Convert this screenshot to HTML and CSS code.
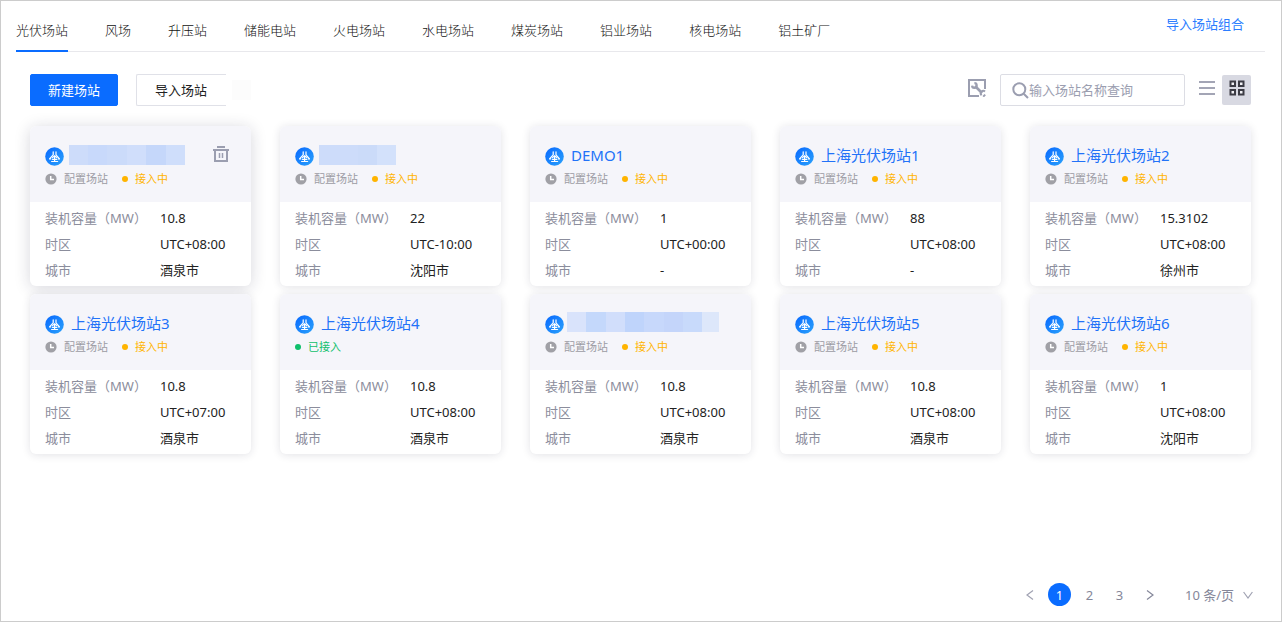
FILE: index.html
```html
<!DOCTYPE html>
<html lang="zh-CN">
<head>
<meta charset="utf-8">
<meta name="viewport" content="width=device-width, initial-scale=1">
<title>光伏场站</title>
<link rel="stylesheet" href="styles.css">
</head>
<body>
<svg class="sprite" aria-hidden="true">
  <defs>
    <linearGradient id="blue" x1="0" y1="0" x2="1" y2="1">
      <stop offset="0" stop-color="#0868ff"/><stop offset="1" stop-color="#2ba2fb"/>
    </linearGradient>
  </defs>
  <symbol id="station" viewBox="0 0 19 19">
    <circle cx="9.500" cy="9.500" r="9.300" fill="url(#blue)"/>
    <g fill="none" stroke="#fff" stroke-width="1.200" stroke-linecap="round">
      <path d="M8.200 4.800v3L4.500 11.800M11 4.800v3l3.500 4M7.400 10.600l2.200-1.800 2.200 1.800M9.600 9v5.200M7.500 12.300h4.200M4.500 11.900h1.300M14.500 11.900h-1.300M6.600 14.500h6"/>
    </g>
  </symbol>
  <symbol id="clock" viewBox="0 0 12 12">
    <circle cx="6" cy="6" r="5.600" fill="#a0a0a6"/>
    <path d="M5.700 3v3.500H9" fill="none" stroke="#fff" stroke-width="1.500"/>
  </symbol>
</svg>
<div class="page">
  <header class="top">
    <nav class="tabs">
      <a class="tab active" href="#">光伏场站</a>
      <a class="tab" href="#">风场</a>
      <a class="tab" href="#">升压站</a>
      <a class="tab" href="#">储能电站</a>
      <a class="tab" href="#">火电场站</a>
      <a class="tab" href="#">水电场站</a>
      <a class="tab" href="#">煤炭场站</a>
      <a class="tab" href="#">铝业场站</a>
      <a class="tab" href="#">核电场站</a>
      <a class="tab" href="#">铝土矿厂</a>
    </nav>
    <a class="import-link" href="#">导入场站组合</a>
  </header>

  <div class="toolbar">
    <button class="btn primary" type="button">新建场站</button>
    <button class="btn open" type="button">导入场站</button>
    <span class="patch"></span>
    <div class="tools">
      <button class="icon-btn config" type="button" aria-label="配置">
        <svg width="18" height="18" viewBox="0 0 18 18" fill="none" stroke="#9b9eb0">
          <path d="M17 10V1H1v16h10" stroke-width="2"/>
          <path d="M7 7l7 7" stroke-width="2.600"/>
          <path d="M6.400 4.200a2.300 2.300 0 1 1-2.300 2.400" stroke-width="2.200"/>
          <path d="M17 12.600a2.200 2.200 0 1 0-3.400 3.600M17.200 15.600l-2 2" stroke-width="2"/>
        </svg>
      </button>
      <label class="search">
        <svg width="17" height="17" viewBox="0 0 17 17" fill="none" stroke="#9b9eb0" stroke-width="2">
          <circle cx="7.300" cy="7.300" r="6"/><path d="M11.700 11.700l4.300 4.300"/>
        </svg>
        <input type="text" placeholder="输入场站名称查询" aria-label="输入场站名称查询">
      </label>
      <button class="icon-btn list" type="button" aria-label="列表">
        <svg width="16" height="16" viewBox="0 0 16 16" stroke="#a3a5b5" stroke-width="2">
          <path d="M0 2h16M0 8h16M0 14h16"/>
        </svg>
      </button>
      <button class="icon-btn grid-view" type="button" aria-label="卡片">
        <svg width="16" height="16" viewBox="0 0 16 16" fill="#f2f2f6" stroke="#3c3c44" stroke-width="2">
          <path d="M1.500 1.500h4.500v4.500H1.500zM10 1.500h4.500v4.500H10zM1.500 10h4.500v4.500H1.500zM10 10h4.500v4.500H10z"/>
        </svg>
      </button>
    </div>
  </div>

  <main class="cards">
    <article class="card raised">
      <div class="head">
        <div class="title"><svg class="logo"><use href="#station"/></svg><span class="mask m1"></span>
          <button class="icon-btn trash" type="button" aria-label="删除">
            <svg width="16" height="16" viewBox="0 0 16 16" fill="none" stroke="#9b9eb0" stroke-width="2">
              <path d="M0 4h16M4 1h8M2 4v11h12V4"/><path d="M6.500 7v5M9.500 7v5" stroke-width="1.500"/>
            </svg>
          </button>
        </div>
        <div class="status"><svg class="clock"><use href="#clock"/></svg><span>配置场站</span><span class="state">接入中</span></div>
      </div>
      <dl><dt>装机容量（MW）</dt><dd>10.8</dd><dt>时区</dt><dd>UTC+08:00</dd><dt>城市</dt><dd>酒泉市</dd></dl>
    </article>
    <article class="card">
      <div class="head">
        <div class="title"><svg class="logo"><use href="#station"/></svg><span class="mask m2"></span></div>
        <div class="status"><svg class="clock"><use href="#clock"/></svg><span>配置场站</span><span class="state">接入中</span></div>
      </div>
      <dl><dt>装机容量（MW）</dt><dd>22</dd><dt>时区</dt><dd>UTC-10:00</dd><dt>城市</dt><dd>沈阳市</dd></dl>
    </article>
    <article class="card">
      <div class="head">
        <div class="title"><svg class="logo"><use href="#station"/></svg><a class="name" href="#">DEMO1</a></div>
        <div class="status"><svg class="clock"><use href="#clock"/></svg><span>配置场站</span><span class="state">接入中</span></div>
      </div>
      <dl><dt>装机容量（MW）</dt><dd>1</dd><dt>时区</dt><dd>UTC+00:00</dd><dt>城市</dt><dd>-</dd></dl>
    </article>
    <article class="card">
      <div class="head">
        <div class="title"><svg class="logo"><use href="#station"/></svg><a class="name" href="#">上海光伏场站1</a></div>
        <div class="status"><svg class="clock"><use href="#clock"/></svg><span>配置场站</span><span class="state">接入中</span></div>
      </div>
      <dl><dt>装机容量（MW）</dt><dd>88</dd><dt>时区</dt><dd>UTC+08:00</dd><dt>城市</dt><dd>-</dd></dl>
    </article>
    <article class="card">
      <div class="head">
        <div class="title"><svg class="logo"><use href="#station"/></svg><a class="name" href="#">上海光伏场站2</a></div>
        <div class="status"><svg class="clock"><use href="#clock"/></svg><span>配置场站</span><span class="state">接入中</span></div>
      </div>
      <dl><dt>装机容量（MW）</dt><dd>15.3102</dd><dt>时区</dt><dd>UTC+08:00</dd><dt>城市</dt><dd>徐州市</dd></dl>
    </article>
    <article class="card">
      <div class="head">
        <div class="title"><svg class="logo"><use href="#station"/></svg><a class="name" href="#">上海光伏场站3</a></div>
        <div class="status"><svg class="clock"><use href="#clock"/></svg><span>配置场站</span><span class="state">接入中</span></div>
      </div>
      <dl><dt>装机容量（MW）</dt><dd>10.8</dd><dt>时区</dt><dd>UTC+07:00</dd><dt>城市</dt><dd>酒泉市</dd></dl>
    </article>
    <article class="card">
      <div class="head">
        <div class="title"><svg class="logo"><use href="#station"/></svg><a class="name" href="#">上海光伏场站4</a></div>
        <div class="status"><span class="state done">已接入</span></div>
      </div>
      <dl><dt>装机容量（MW）</dt><dd>10.8</dd><dt>时区</dt><dd>UTC+08:00</dd><dt>城市</dt><dd>酒泉市</dd></dl>
    </article>
    <article class="card">
      <div class="head">
        <div class="title"><svg class="logo"><use href="#station"/></svg><span class="mask m3"></span></div>
        <div class="status"><svg class="clock"><use href="#clock"/></svg><span>配置场站</span><span class="state">接入中</span></div>
      </div>
      <dl><dt>装机容量（MW）</dt><dd>10.8</dd><dt>时区</dt><dd>UTC+08:00</dd><dt>城市</dt><dd>酒泉市</dd></dl>
    </article>
    <article class="card">
      <div class="head">
        <div class="title"><svg class="logo"><use href="#station"/></svg><a class="name" href="#">上海光伏场站5</a></div>
        <div class="status"><svg class="clock"><use href="#clock"/></svg><span>配置场站</span><span class="state">接入中</span></div>
      </div>
      <dl><dt>装机容量（MW）</dt><dd>10.8</dd><dt>时区</dt><dd>UTC+08:00</dd><dt>城市</dt><dd>酒泉市</dd></dl>
    </article>
    <article class="card">
      <div class="head">
        <div class="title"><svg class="logo"><use href="#station"/></svg><a class="name" href="#">上海光伏场站6</a></div>
        <div class="status"><svg class="clock"><use href="#clock"/></svg><span>配置场站</span><span class="state">接入中</span></div>
      </div>
      <dl><dt>装机容量（MW）</dt><dd>1</dd><dt>时区</dt><dd>UTC+08:00</dd><dt>城市</dt><dd>沈阳市</dd></dl>
    </article>
  </main>

  <footer class="pager">
    <button class="pg" type="button" aria-label="上一页"><svg width="8" height="10" viewBox="0 0 8 10" fill="none" stroke="#a0a2b2" stroke-width="1.200"><path d="M7 .6L1 5l6 4.400"/></svg></button>
    <button class="pg current" type="button">1</button>
    <button class="pg" type="button">2</button>
    <button class="pg" type="button">3</button>
    <button class="pg" type="button" aria-label="下一页"><svg width="8" height="10" viewBox="0 0 8 10" fill="none" stroke="#85879a" stroke-width="1.200"><path d="M1 .6L7 5 1 9.400"/></svg></button>
    <label class="size">
      <select aria-label="每页条数"><option>10 条/页</option><option>20 条/页</option></select>
      <svg width="10" height="8" viewBox="0 0 10 8" fill="none" stroke="#a0a2b2" stroke-width="1.200"><path d="M.6 1L5 7l4.400-6"/></svg>
    </label>
  </footer>
</div>
</body>
</html>
```
FILE: styles.css
```css
* { box-sizing: border-box; }
body {
  margin: 0;
  font: 13px/20px "Noto Sans", "Noto Sans CJK SC", sans-serif;
  color: #2e2f38;
  background: #fff;
}
button, input, select { font: inherit; }
a { text-decoration: none; color: inherit; }
.sprite { position: absolute; width: 0; height: 0; }
.page {
  min-height: 100vh;
  display: flex;
  flex-direction: column;
  border: 1px solid #ccc;
}

.top {
  display: flex;
  justify-content: space-between;
  margin: 0 16px 0 15px;
  border-bottom: 1px solid #e8e8ec;
}
.tabs { display: flex; gap: 37px; }
.tab {
  padding: 19px 0 10px;
  margin-bottom: -1px;
  border-bottom: 2px solid transparent;
  white-space: nowrap;
  font-weight: 300;
  color: #111;
}
.tab.active { border-color: #0a6cff; }
.import-link { padding: 13px 21px 0 0; color: #2b7dff; white-space: nowrap; }

.toolbar {
  display: flex;
  align-items: center;
  padding: 22px 30px 20px 29px;
}
.btn {
  height: 32px;
  padding: 0 17px;
  border: 1px solid #e0e1e8;
  border-radius: 2px;
  background: #fff;
  white-space: nowrap;
  color: #222;
}
.btn.primary { background: #0a6cff; border-color: #0a6cff; color: #fff; }
.btn.open { margin-left: 18px; padding: 0 19px 0 18px; border-right: 0; border-radius: 2px 0 0 2px; }
.patch { width: 19px; height: 20px; margin-left: 6px; background: #fcfcfc; }
.tools { display: flex; align-items: center; margin-left: auto; }
.icon-btn {
  display: flex;
  align-items: center;
  justify-content: center;
  padding: 0;
  border: 0;
  background: none;
}
.config { margin-right: 14px; padding-bottom: 4px; }
.search {
  display: flex;
  align-items: center;
  width: 185px;
  height: 32px;
  padding: 0 8px 0 11px;
  border: 1px solid #dcdde4;
  border-radius: 2px;
}
.search svg { flex: none; }
.search input {
  flex: 1;
  min-width: 0;
  padding: 0;
  border: 0;
  outline: 0;
  background: none;
}
.search input::placeholder { color: #9b9eb0; opacity: 1; }
.list { margin: 0 7px 0 14px; padding-bottom: 4px; }
.grid-view {
  width: 29px;
  height: 30px;
  padding-bottom: 4px;
  border-radius: 2px;
  background: #d8d9e2;
}

.cards {
  display: grid;
  grid-template-columns: repeat(5, minmax(0, 1fr));
  gap: 8px 29px;
  padding: 0 30px 0 29px;
}
.card {
  overflow: hidden;
  border-radius: 6px;
  background: #fff;
  box-shadow: 0 1px 8px rgba(30, 30, 60, 0.13);
}
.card.raised { box-shadow: 0 2px 16px rgba(30, 30, 60, 0.18); }
.head { padding: 18px 15px 13px; background: #f5f5fa; }
.title { display: flex; align-items: center; height: 24px; margin-bottom: 1px; }
.logo { flex: none; width: 19px; height: 19px; }
.name {
  margin-left: 7px;
  padding-bottom: 2px;
  font-size: 15px;
  line-height: 22px;
  white-space: nowrap;
  color: #2272f8;
}
.trash { margin: 0 7px 0 auto; padding-bottom: 4px; }
.mask { height: 20px; margin: 0 0 2px 5px; }
.m1 {
  width: 116px;
  background: linear-gradient(90deg, #cddcfa 0 19px, #c8d9fb 19px 38px, #cbdbfa 38px 58px, #d0defb 58px 77px, #c5d7fa 77px 97px, #cfdefb 97px);
}
.m2 {
  width: 77px;
  background: linear-gradient(90deg, #cddcfa 0 39px, #cbdbf9 39px 58px, #d3e1fb 58px);
}
.m3 {
  width: 152px;
  margin: 0 0 4px 3px;
  background: linear-gradient(90deg, #d9e3fb 0 19px, #c4d8fb 19px 39px, #d1defb 39px 58px, #bfd4fb 58px 77px, #c7d8fb 77px 97px, #c4d5fa 97px 116px, #c8dafb 116px 135px, #dde7fa 135px);
}
.status {
  display: flex;
  align-items: center;
  font-size: 11px;
  line-height: 20px;
  white-space: nowrap;
  color: #9c9ca4;
}
.clock { width: 12px; height: 12px; margin-right: 7px; }
.state { display: flex; align-items: center; color: #ffb400; }
.state::before {
  content: "";
  width: 6px;
  height: 6px;
  margin-right: 7px;
  border-radius: 50%;
  background: currentColor;
}
.clock ~ .state { margin-left: 14px; }
.done { color: #0fbf6b; }
.card dl {
  display: grid;
  grid-template-columns: 115px 1fr;
  margin: 0;
  padding: 3px 0 3px 15px;
  line-height: 26px;
  white-space: nowrap;
}
.card dt { color: #8b8d9c; }
.card dd { margin: 0; color: #222; }

.pager {
  display: flex;
  align-items: center;
  justify-content: flex-end;
  gap: 7px;
  margin-top: auto;
  padding: 20px 28px 15px;
  color: #85879a;
}
.pg {
  display: flex;
  align-items: center;
  justify-content: center;
  width: 23px;
  height: 23px;
  padding: 0;
  border: 0;
  border-radius: 50%;
  background: none;
  color: inherit;
}
.pg.current { background: #0a6cff; color: #fff; }
.size { display: flex; align-items: center; gap: 8px; margin-left: 17px; }
.size select {
  appearance: none;
  padding: 0;
  border: 0;
  background: none;
  color: inherit;
}
```
